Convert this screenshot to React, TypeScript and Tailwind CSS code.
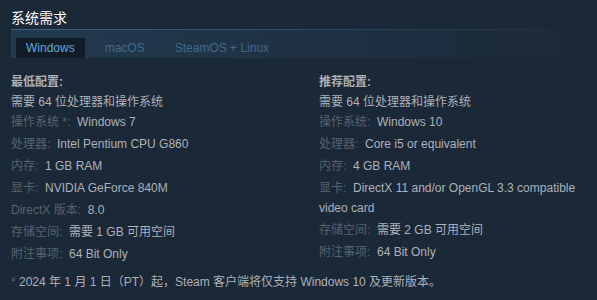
import React, { useState } from 'react';

interface Req {
  label: string;
  value: string;
}

const minReqs: Req[] = [
  { label: '操作系统 *:', value: 'Windows 7' },
  { label: '处理器:', value: 'Intel Pentium CPU G860' },
  { label: '内存:', value: '1 GB RAM' },
  { label: '显卡:', value: 'NVIDIA GeForce 840M' },
  { label: 'DirectX 版本:', value: '8.0' },
  { label: '存储空间:', value: '需要 1 GB 可用空间' },
  { label: '附注事项:', value: '64 Bit Only' },
];

const recReqs: Req[] = [
  { label: '操作系统:', value: 'Windows 10' },
  { label: '处理器:', value: 'Core i5 or equivalent' },
  { label: '内存:', value: '4 GB RAM' },
  { label: '显卡:', value: 'DirectX 11 and/or OpenGL 3.3 compatible video card' },
  { label: '存储空间:', value: '需要 2 GB 可用空间' },
  { label: '附注事项:', value: '64 Bit Only' },
];

const tabs = ['Windows', 'macOS', 'SteamOS + Linux'];

const Column: React.FC<{ title: string; items: Req[] }> = ({ title, items }) => (
  <div>
    <div className="font-bold text-[#acb2b8] leading-[20px]">{title}</div>
    <ul>
      <li className="leading-[20px] text-[#acb2b8]">需要 64 位处理器和操作系统</li>
      {items.map((r) => (
        <li key={r.label} className="leading-[20px] mb-[2px] text-[#acb2b8]">
          <span className="text-[#56636f]">{r.label}</span>&nbsp; {r.value}
        </li>
      ))}
    </ul>
  </div>
);

export default function App() {
  const [active, setActive] = useState('Windows');

  return (
    <div
      className="w-[597px] h-[300px] bg-[#1b2838] text-[12px] overflow-hidden"
      style={{ fontFamily: '"Liberation Sans", Arial, "Noto Sans CJK SC", sans-serif' }}
    >
      <div className="pl-[11px]">
        <h2 className="text-[14px] text-white leading-[18px] pt-[9px] pb-[2px]">系统需求</h2>
        <div className="h-px bg-gradient-to-r from-[#3a6585] via-[#2c4c66] to-[#1b2838]" />
        <div className="h-[28px] pl-[5px] flex items-end gap-[10px] bg-gradient-to-r from-[#223a4f] to-[#1b2838]">
          {tabs.map((t) => (
            <button
              key={t}
              onClick={() => setActive(t)}
              className={`h-[20px] px-[10px] text-[12px] leading-[20px] ${
                active === t ? 'bg-[#121c26] text-[#5da9dd]' : 'text-[#45698a]'
              }`}
            >
              {t}
            </button>
          ))}
        </div>
      </div>

      <div className="flex pl-[11px] pt-[14px]">
        <div className="w-[308px] shrink-0">
          <Column title="最低配置:" items={minReqs} />
        </div>
        <div className="flex-1 min-w-0 pr-[4px]">
          <Column title="推荐配置:" items={recReqs} />
        </div>
      </div>

      <div className="pl-[11px] pt-[6px] leading-[20px] text-[#acb2b8]">
        <span className="text-[#56636f]">*</span> 2024 年 1 月 1 日（PT）起，Steam 客户端将仅支持 Windows 10 及更新版本。
      </div>
    </div>
  );
}
